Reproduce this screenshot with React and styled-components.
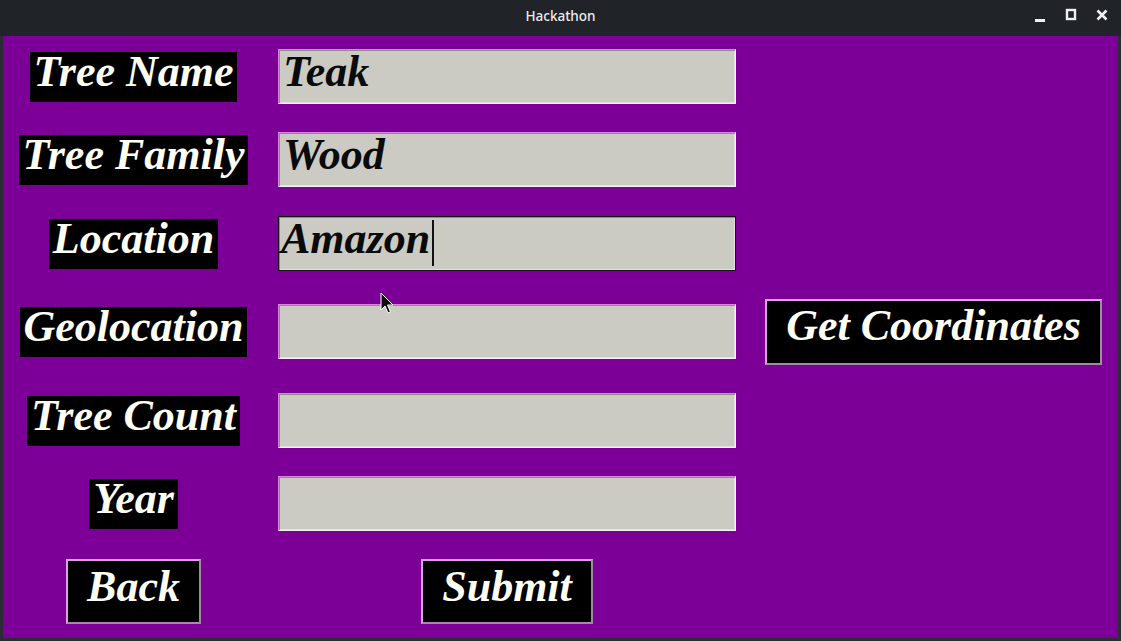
import styled, { createGlobalStyle } from "styled-components";

const GlobalStyle = createGlobalStyle`
    html, body {
        margin: 0;
        padding: 0;
        background: #2a2d32;
    }
`;

const Window = styled.div`
    width: 1121px;
    height: 641px;
    display: flex;
    flex-direction: column;
    background: #2a2d32;
    position: relative;
    overflow: hidden;
`;

const TitleBar = styled.div`
    height: 36px;
    flex: none;
    background: #202327;
    display: flex;
    align-items: center;
    justify-content: center;
    position: relative;
`;

const Title = styled.span`
    font-family: "Noto Sans", "DejaVu Sans", sans-serif;
    font-size: 13.5px;
    font-weight: 500;
    color: #ececec;
    margin-top: -4px;
`;

const Controls = styled.div`
    position: absolute;
    right: 13px;
    top: 8px;
    display: flex;
    gap: 19px;
    align-items: center;
`;

const Form = styled.div`
    flex: 1;
    margin: 0 3px 3px;
    background: #7c0097;
    display: grid;
    grid-template-columns: 261px 486px 367px;
    grid-template-rows: 81px 85px 83px 93px 85px 81px 94px;
    justify-items: center;
    align-items: center;
`;

const Label = styled.div`
    grid-column: 1;
    grid-row: ${(props) => props.row};
    background: #000;
    color: #fffff4;
    font-family: "Liberation Serif", "Times New Roman", serif;
    font-weight: bold;
    font-style: italic;
    font-size: 44px;
    line-height: 36px;
    padding: 2px 4px 12px;
    white-space: nowrap;
`;

const Entry = styled.div`
    grid-column: 2;
    grid-row: ${(props) => props.row};
    box-sizing: border-box;
    width: 458px;
    height: 55px;
    background: #cbcbc3;
    border: 1px solid;
    border-color: ${(props) =>
        props.focused ? "#141414" : "#d886dc #f4f4f4 #f4f4f4 #d886dc"};
    box-shadow: inset 1px 1px 0 #8c8c86, inset -1px -1px 0 #e2e2dc;
    display: flex;
    align-items: flex-start;
    padding: 4px 0 0 ${(props) => (props.focused ? "2px" : "4px")};
    font-family: "Liberation Serif", "Times New Roman", serif;
    font-weight: bold;
    font-style: italic;
    font-size: 44px;
    line-height: 36px;
    color: #0a0a0a;
    white-space: nowrap;
`;

const Caret = styled.span`
    display: inline-block;
    width: 2px;
    height: 46px;
    background: #111;
    margin-left: 2px;
    margin-top: -1px;
`;

const Button = styled.div`
    grid-column: ${(props) => props.col};
    grid-row: ${(props) => props.row};
    box-sizing: border-box;
    height: ${(props) => props.h || 66}px;
    background: #000;
    border: 2px solid;
    border-color: #dc9ee4 #a08aa4 #a08aa4 #dc9ee4;
    padding: ${(props) => props.pt || 7}px 19px 0;
    display: flex;
    align-items: flex-start;
    color: #fffff4;
    font-family: "Liberation Serif", "Times New Roman", serif;
    font-weight: bold;
    font-style: italic;
    font-size: 44px;
    line-height: 36px;
    white-space: nowrap;
`;

const Pointer = styled.svg`
    position: absolute;
    left: 380px;
    top: 292px;
`;

const rows = [
    { label: "Tree Name", value: "Teak" },
    { label: "Tree Family", value: "Wood" },
    { label: "Location", value: "Amazon", focused: true },
    { label: "Geolocation", value: "" },
    { label: "Tree Count", value: "" },
    { label: "Year", value: "" },
];

const App = () => {
    return (
        <Window>
            <GlobalStyle />
            <TitleBar>
                <Title>Hackathon</Title>
                <Controls>
                    <svg width="12" height="14" viewBox="0 0 12 14">
                        <rect x="1" y="11" width="10" height="3" fill="#f0f0f0" />
                    </svg>
                    <svg width="12" height="14" viewBox="0 0 12 14">
                        <rect x="2" y="2" width="8" height="9" fill="none" stroke="#f0f0f0" strokeWidth="2.4" />
                    </svg>
                    <svg width="12" height="14" viewBox="0 0 12 14">
                        <path d="M1.5 2.5 L10.5 11.5 M10.5 2.5 L1.5 11.5" stroke="#f0f0f0" strokeWidth="2.6" />
                    </svg>
                </Controls>
            </TitleBar>
            <Form>
                {rows.map((r, i) => (
                    <Label key={r.label} row={i + 1}>{r.label}</Label>
                ))}
                {rows.map((r, i) => (
                    <Entry key={r.label + "-e"} row={i + 1} focused={r.focused}>
                        {r.value}
                        {r.focused && <Caret />}
                    </Entry>
                ))}
                <Button col={3} row={4}>Get Coordinates</Button>
                <Button col={1} row={7} h={65} pt={8}>Back</Button>
                <Button col={2} row={7} h={65} pt={8}>Submit</Button>
            </Form>
            <Pointer width="16" height="24" viewBox="0 0 16 24">
                <path d="M1 1 L1 18 L5 14 L8 21 L10.5 20 L7.5 13 L13 13 Z" fill="#111" stroke="#fff" strokeWidth="1" />
            </Pointer>
        </Window>
    );
};

export default App;
